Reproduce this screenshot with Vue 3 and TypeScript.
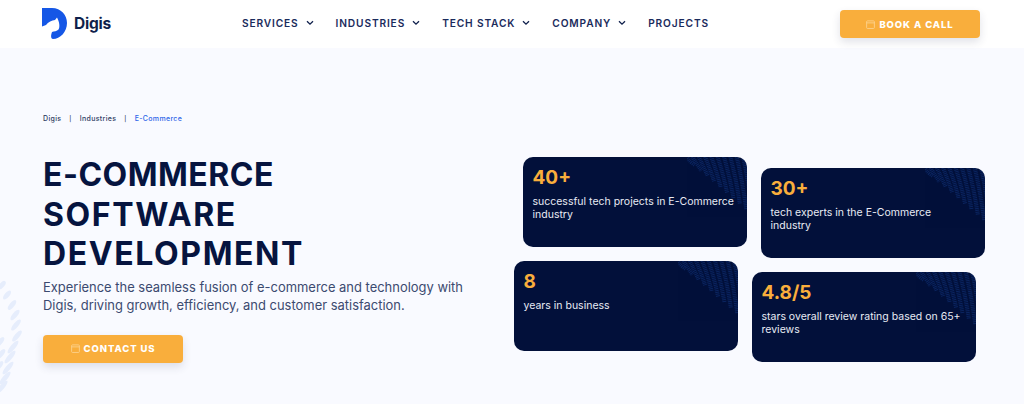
<script setup lang="ts">
const navItems = [
  { label: 'SERVICES', arrow: true },
  { label: 'INDUSTRIES', arrow: true },
  { label: 'TECH STACK', arrow: true },
  { label: 'COMPANY', arrow: true },
  { label: 'PROJECTS', arrow: false },
]

const leftStats = [
  { value: '40+', text: 'successful tech projects in E-Commerce industry', shift: true },
  { value: '8', text: 'years in business', shift: false },
]
const rightStats = [
  { value: '30+', text: 'tech experts in the E-Commerce industry', shift: true },
  { value: '4.8/5', text: 'stars overall review rating based on 65+ reviews', shift: false },
]

// feather strokes in the card corner
const feather = Array.from({ length: 10 }, (_, i) => i)
const featherPath = (i: number) =>
  `M${i * 6.4 - 2} -2 Q${i * 6.4 + 4} ${6 + i * 2} ${i * 6.4 + 8} ${8 + i * 5.5}`

// dabs of the pale feather on the left edge: x, y, length
const sideDabs = [
  [2, 5, 5], [7, 15, 5.5], [12, 25, 6], [15, 35, 6.5], [16, 45, 7], [17, 56, 7],
  [13, 67, 8], [10, 77, 8], [8, 88, 8], [5, 98, 8], [2, 107, 8],
  [0, 62, 6], [1, 74, 6], [-1, 86, 6],
]
</script>

<template>
  <div class="page">
    <header class="header">
      <a class="logo">
        <svg class="logo-mark" viewBox="0 0 26 32" width="26" height="32">
          <path
            d="M0 0 H10 C19 0 25 7 25 15 C25 24 18 31 11 31 C9 31 8.5 28 10 24 C12 23.5 15 23 16.5 21.5 C18 19 17.5 14 15 9.5 L13 12 C10 12.5 6 14 4 17 L0 18.5 Z"
            fill="#1557e6"
          />
        </svg>
        <span class="logo-name">Digis</span>
      </a>
      <nav class="nav">
        <a v-for="item in navItems" :key="item.label" class="nav-item">
          {{ item.label }}
          <svg v-if="item.arrow" class="chev" viewBox="0 0 8 6" width="8" height="6">
            <path d="M1 1.2 L4 4.2 L7 1.2" fill="none" stroke="#0f1f4b" stroke-width="1.3" />
          </svg>
        </a>
      </nav>
      <button class="btn btn-book" type="button">
        <svg class="cal" viewBox="0 0 10 10" width="9" height="9">
          <rect x="0.7" y="1" width="8.6" height="8.4" rx="1" fill="none" stroke="#fdd9a0" stroke-width="0.8" />
          <path d="M0.7 3.2 H9.3" stroke="#fdd9a0" stroke-width="0.8" />
        </svg>
        BOOK A CALL
      </button>
    </header>

    <main class="hero">
      <svg class="side-deco" viewBox="0 0 24 116" width="24" height="116">
        <g fill="#e6edfc">
          <ellipse
            v-for="d in sideDabs"
            :key="`${d[0]}-${d[1]}`"
            :cx="d[0]"
            :cy="d[1]"
            rx="2.5"
            :ry="d[2]"
            :transform="`rotate(40 ${d[0]} ${d[1]})`"
          />
        </g>
      </svg>

      <section class="intro">
        <div class="crumbs">
          <span>Digis</span>
          <span class="sep">|</span>
          <span>Industries</span>
          <span class="sep">|</span>
          <span class="current">E-Commerce</span>
        </div>
        <h1 class="title">
          <span class="line-a">E-COMMERCE</span>
          <span class="line-b">SOFTWARE</span>
          <span class="line-b">DEVELOPMENT</span>
        </h1>
        <p class="lead">
          Experience the seamless fusion of e-commerce and technology with Digis, driving growth,
          efficiency, and customer satisfaction.
        </p>
        <button class="btn btn-contact" type="button">
          <svg class="cal" viewBox="0 0 10 10" width="9" height="9">
            <rect x="0.7" y="1" width="8.6" height="8.4" rx="1" fill="none" stroke="#fdd9a0" stroke-width="0.8" />
            <path d="M0.7 3.2 H9.3" stroke="#fdd9a0" stroke-width="0.8" />
          </svg>
          CONTACT US
        </button>
      </section>

      <section class="stats">
        <div class="stat-col">
          <article v-for="s in leftStats" :key="s.value" class="card" :class="{ 'card-shift': s.shift }">
            <svg class="card-deco" viewBox="0 0 60 60" width="60" height="60">
              <g stroke="#12337a" stroke-width="4" stroke-dasharray="1 0.8" fill="none" opacity="0.6">
                <path v-for="i in feather" :key="i" :d="featherPath(i)" />
              </g>
            </svg>
            <div class="card-value">{{ s.value }}</div>
            <div class="card-text">{{ s.text }}</div>
          </article>
        </div>
        <div class="stat-col stat-col-right">
          <article v-for="s in rightStats" :key="s.value" class="card" :class="{ 'card-shift': s.shift }">
            <svg class="card-deco" viewBox="0 0 60 60" width="60" height="60">
              <g stroke="#12337a" stroke-width="4" stroke-dasharray="1 0.8" fill="none" opacity="0.6">
                <path v-for="i in feather" :key="i" :d="featherPath(i)" />
              </g>
            </svg>
            <div class="card-value">{{ s.value }}</div>
            <div class="card-text">{{ s.text }}</div>
          </article>
        </div>
      </section>
    </main>
  </div>
</template>

<style>
html,
body {
  margin: 0;
  background: #f9faff;
}
</style>

<style scoped>
.page {
  width: 1024px;
  height: 404px;
  overflow: hidden;
  font-family: Inter, 'Liberation Sans', sans-serif;
  color: #0f1f4b;
  background: #f9faff;
}

/* Top bar */
.header {
  height: 48px;
  box-sizing: border-box;
  padding: 0 44px 0 42px;
  display: flex;
  align-items: center;
  background: #fff;
}
.logo {
  display: flex;
  align-items: center;
  gap: 6px;
  width: 200px;
}
.logo-mark {
  display: block;
}
.logo-name {
  margin-top: -2px;
  font-size: 15.5px;
  font-weight: 700;
  color: #0f1f4b;
  letter-spacing: -0.2px;
}
.nav {
  display: flex;
  align-items: center;
  gap: 22px;
  margin-top: -3px;
}
.nav-item {
  display: flex;
  align-items: center;
  gap: 7px;
  font-size: 10.2px;
  font-weight: 600;
  letter-spacing: 0.85px;
  color: #1a2b5c;
}
.btn {
  border: none;
  border-radius: 4px;
  background: #f9ae3c;
  color: #fff;
  font-family: inherit;
  font-size: 9.5px;
  font-weight: 800;
  letter-spacing: 0.9px;
  display: flex;
  align-items: center;
  justify-content: center;
  gap: 4px;
  height: 28px;
  width: 140px;
  padding: 0;
  box-shadow: 0 4px 8px rgba(40, 50, 90, 0.14);
}
.btn-book {
  margin-left: auto;
}
.cal {
  display: block;
}

/* Hero */
.hero {
  position: relative;
  display: flex;
  height: 356px;
  padding: 0 0 0 43px;
}
.side-deco {
  position: absolute;
  left: 0;
  top: 232px;
}
.intro {
  width: 445px;
  padding-top: 66px;
}
.crumbs {
  display: flex;
  gap: 8px;
  font-size: 7px;
  font-weight: 500;
  line-height: 9px;
  letter-spacing: 0.33px;
  color: #2d3a5f;
}
.crumbs .sep {
  font-size: 6px;
}
.crumbs .current {
  color: #2f66e8;
}
.title {
  margin: 32px 0 0;
  font-size: 32px;
  font-weight: 700;
  line-height: 39.5px;
  color: #06143f;
}
.title span {
  display: block;
}
.line-a {
  letter-spacing: 0.5px;
}
.line-b {
  letter-spacing: 1.6px;
}
.lead {
  margin: 4px 0 0;
  width: 430px;
  font-size: 12.95px;
  line-height: 18.5px;
  color: #3c4a70;
}
.btn-contact {
  margin-top: 20px;
}

/* Stat cards */
.stats {
  display: flex;
  gap: 14px;
  margin-left: 26px;
  padding-top: 109px;
}
.stat-col {
  display: flex;
  flex-direction: column;
  gap: 14px;
}
.stat-col-right {
  margin-top: 11px;
}
.card {
  position: relative;
  overflow: hidden;
  box-sizing: border-box;
  width: 224px;
  height: 90px;
  padding: 9px 12px 9px 9.5px;
  border-radius: 10px;
  background: #02103a;
}
.card-shift {
  margin-left: 9px;
  margin-right: -9px;
}
.card-deco {
  position: absolute;
  top: 0;
  right: 0;
}
.card-value {
  position: relative;
  font-size: 19px;
  font-weight: 700;
  line-height: 23px;
  color: #f9ae3c;
}
.card-text {
  position: relative;
  margin-top: 6px;
  font-size: 10.5px;
  line-height: 13.3px;
  color: #e8ebf4;
}
</style>
